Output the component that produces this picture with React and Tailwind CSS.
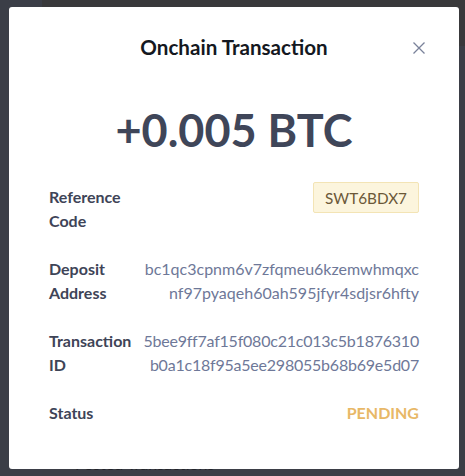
import React from "react";

export default function App() {
  const font = { fontFamily: "Lato, 'Open Sans', sans-serif" };
  return (
    <div className="relative w-[465px] h-[476px] overflow-hidden bg-[#3a3c42]" style={font}>
      {/* background app */}
      <div className="flex h-full">
        <div className="w-[42px] h-full bg-[#3b3e47]" />
        <div className="flex-1 flex flex-col">
          <div className="h-[66px] bg-[#39393b]" />
          <div className="flex-1 bg-[#3b3e46] pl-[33px] pt-[406px] text-[16px] text-[#23252b]">
            Posted Transactions
          </div>
        </div>
      </div>
      {/* modal */}
      <div className="absolute left-[9px] top-[7px] w-[450px] h-[462px] bg-white rounded-[3px] px-[40px] pt-[28px]">
        <div className="relative flex justify-center">
          <h2 className="text-[20.6px] leading-[24px] font-bold text-[#141821]">Onchain Transaction</h2>
          <button className="absolute right-[-6px] top-[7px] w-[12px] h-[12px] text-[#7a829a]">
            <svg viewBox="0 0 12 12" width="12" height="12" fill="none" stroke="currentColor" strokeWidth="1.3">
              <path d="M0.5 0.5L11.5 11.5M11.5 0.5L0.5 11.5" />
            </svg>
          </button>
        </div>
        <div className="mt-[43px] text-center text-[45px] leading-[56px] font-bold text-[#3f4659]">
          +0.005 BTC
        </div>
        <div className="mt-[27px] flex flex-col gap-[24px] text-[16px] leading-[24px]">
          <div className="flex justify-between items-start">
            <div className="font-bold text-[#3e4457]">Reference<br />Code</div>
            <div className="-mt-[3px] h-[31px] px-[11px] flex items-center bg-[#fcf5dd] border border-[#f3e4b5] rounded-[2px] text-[#6b5838] text-[15.3px]">
              SWT6BDX7
            </div>
          </div>
          <div className="flex justify-between items-start">
            <div className="font-bold text-[#3e4457]">Deposit<br />Address</div>
            <div className="text-right text-[#6e7898]">
              <div>bc1qc3cpnm6v7zfqmeu6kzemwhmqxc</div>
              <div>nf97pyaqeh60ah595jfyr4sdjsr6hfty</div>
            </div>
          </div>
          <div className="flex justify-between items-start">
            <div className="font-bold text-[#3e4457]">Transaction<br />ID</div>
            <div className="text-right text-[#6e7898] tracking-[-0.22px]">
              <div>5bee9ff7af15f080c21c013c5b1876310</div>
              <div>b0a1c18f95a5ee298055b68b69e5d07</div>
            </div>
          </div>
          <div className="flex justify-between items-start">
            <div className="font-bold text-[#3e4457]">Status</div>
            <div className="font-bold text-[#e8b867]">PENDING</div>
          </div>
        </div>
      </div>
    </div>
  );
}
